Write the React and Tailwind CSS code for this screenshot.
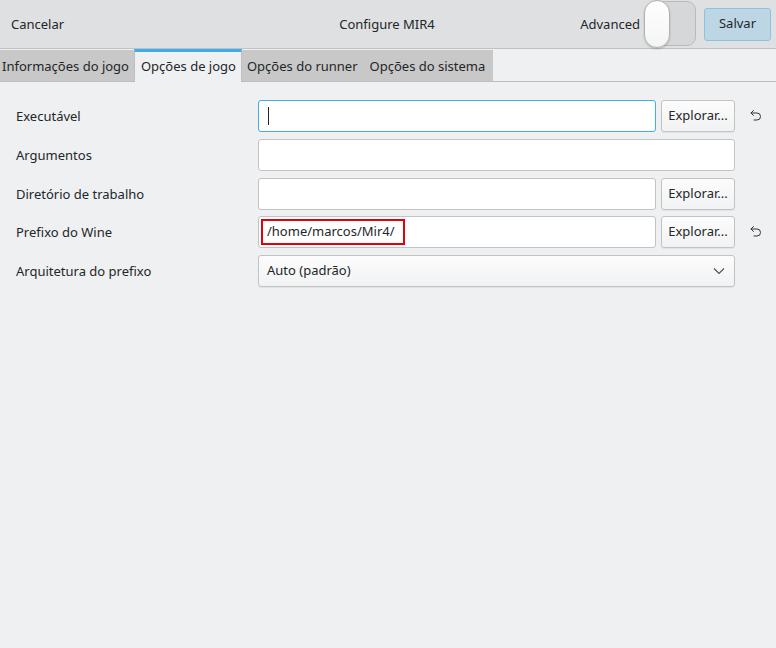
import React from "react";

function ResetIcon() {
  return (
    <svg width="14" height="14" viewBox="0 0 14 14" fill="none" stroke="#31363b" strokeWidth="1" strokeLinecap="round" strokeLinejoin="round">
      <path d="M4.5 1.5 L2 4 L4.5 6.5" />
      <path d="M2 4 H8 A3.5 3.5 0 0 1 8 11 H5" />
    </svg>
  );
}

function Chevron() {
  return (
    <svg width="12" height="8" viewBox="0 0 12 8" fill="none" stroke="#4d4d4d" strokeWidth="1.1">
      <path d="M1 1.5 L6 6.5 L11 1.5" />
    </svg>
  );
}

function Button({ children }) {
  return (
    <div className="h-[32px] w-[74px] shrink-0 flex items-center justify-center rounded-[3px] border border-[#c2c3c5] bg-gradient-to-b from-[#fcfcfc] to-[#f1f2f3] shadow-[0_1px_1px_rgba(0,0,0,0.06)] text-[#232629]">
      {children}
    </div>
  );
}

function Input({ focused, children }) {
  return (
    <div
      className={
        "h-[32px] flex-1 flex items-center rounded-[3px] bg-white min-w-0 " +
        (focused ? "border border-[#3daee9]" : "border border-[#c2c3c5]")
      }
    >
      {children}
    </div>
  );
}

function Label({ children }) {
  return <div className="w-[242px] pt-[2px]">{children}</div>;
}

export default function App() {
  const tabs = [
    { label: "Informações do jogo", active: false, cls: "pl-[2px] pr-[5px]" },
    { label: "Opções de jogo", active: true },
    { label: "Opções do runner", active: false, cls: "pl-[5px] pr-[6px]" },
    { label: "Opções do sistema", active: false, cls: "pl-[6px] pr-[8px]" },
  ];
  return (
    <div
      className="w-[776px] h-[648px] bg-[#eff0f1] text-[#232629] text-[13px] overflow-hidden flex flex-col"
      style={{ fontFamily: '"Noto Sans", "Open Sans", sans-serif' }}
    >
      {/* Header */}
      <div className="h-[49px] shrink-0 bg-[#dfe0e2] border-b border-[#c0c1c3] flex items-center pt-[1px]">
        <div className="flex-1 pl-[11px]">Cancelar</div>
        <div className="pr-[8px]">Configure MIR4</div>
        <div className="flex-1 flex items-center justify-end pr-[5px]">
          <span className="mr-[4px]">Advanced</span>
          <div className="relative w-[52px] h-[48px] mr-[8px] -mt-[1px]">
            <div className="absolute left-[12px] right-0 top-[1px] bottom-[2px] rounded-[9px] bg-[#d6d7d9] border border-[#b9babc]" />
            <div className="absolute left-0 top-0 w-[26px] h-[48px] rounded-[13px] bg-gradient-to-b from-white to-[#f4f4f4] border border-[#b0b1b3] shadow-[0_1px_2px_rgba(0,0,0,0.2)]" />
          </div>
          <div className="h-[33px] w-[67px] -mt-[1px] flex items-center justify-center rounded-[3px] border border-[#8dc1e2] bg-[#bdd6e6]">
            Salvar
          </div>
        </div>
      </div>

      {/* Tabs */}
      <div className="h-[33px] shrink-0 flex items-end border-b border-[#bdbec0]">
        {tabs.map((t) =>
          t.active ? (
            <div
              key={t.label}
              className="h-[33px] -mb-px bg-[#eff0f1] border-t-[3px] border-[#3daee9] border-x border-x-[#bdbec0] flex items-center pl-[6px] pr-[5px]"
            >
              {t.label}
            </div>
          ) : (
            <div key={t.label} className={"h-[31px] bg-[#c8c8c8] flex items-center pt-[2px] " + t.cls}>
              {t.label}
            </div>
          )
        )}
      </div>

      {/* Form */}
      <div className="pt-[18px] pl-[16px] flex flex-col gap-[7px]">
        <div className="flex items-center">
          <Label>Executável</Label>
          <div className="w-[477px] flex gap-[5px]">
            <Input focused>
              <div className="ml-[9px] w-px h-[18px] bg-[#232629]" />
            </Input>
            <Button>Explorar...</Button>
          </div>
          <div className="w-[41px] flex justify-center">
            <ResetIcon />
          </div>
        </div>

        <div className="flex items-center">
          <Label>Argumentos</Label>
          <div className="w-[477px] flex">
            <Input />
          </div>
        </div>

        <div className="flex items-center">
          <Label>Diretório de trabalho</Label>
          <div className="w-[477px] flex gap-[5px]">
            <Input />
            <Button>Explorar...</Button>
          </div>
        </div>

        <div className="flex items-center -mt-px">
          <Label>Prefixo do Wine</Label>
          <div className="w-[477px] flex gap-[5px]">
            <Input>
              <span className="ml-[2px] h-[26px] flex items-center border-2 border-[#e4000a] pl-[4px] pr-[8px]">
                /home/marcos/Mir4/
              </span>
            </Input>
            <Button>Explorar...</Button>
          </div>
          <div className="w-[41px] flex justify-center">
            <ResetIcon />
          </div>
        </div>

        <div className="flex items-center">
          <Label>Arquitetura do prefixo</Label>
          <div className="w-[477px] h-[32px] flex items-center justify-between rounded-[3px] border border-[#c2c3c5] bg-gradient-to-b from-[#fcfcfc] to-[#f1f2f3] shadow-[0_1px_1px_rgba(0,0,0,0.06)] pl-[8px] pr-[9px]">
            <span>Auto (padrão)</span>
            <Chevron />
          </div>
        </div>
      </div>
    </div>
  );
}
